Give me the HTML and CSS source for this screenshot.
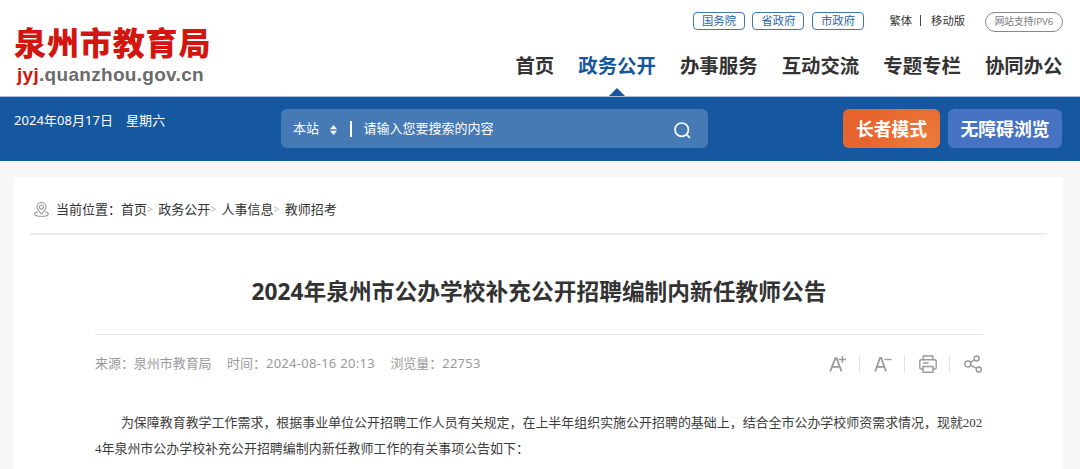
FILE: index.html
```
<!DOCTYPE html>
<html lang="zh-CN">
<head>
  <meta charset="UTF-8">
  <meta name="viewport" content="width=device-width, initial-scale=1.0">
  <title>2024年泉州市公办学校补充公开招聘编制内新任教师公告</title>
  <link rel="stylesheet" href="styles.css">
</head>
<body>
  <header class="header">
    <div class="logo">
      <div class="logo-name">泉州市教育局</div>
      <div class="logo-url"><span>jyj</span>.quanzhou.gov.cn</div>
    </div>
    <div class="header-right">
      <div class="top-links">
        <a class="gov-link">国务院</a>
        <a class="gov-link">省政府</a>
        <a class="gov-link">市政府</a>
        <a class="lang">繁体</a>
        <span class="split"></span>
        <a class="mobile">移动版</a>
        <span class="ipv6">网站支持IPV6</span>
      </div>
      <nav class="nav">
        <a>首页</a>
        <a class="active">政务公开</a>
        <a>办事服务</a>
        <a>互动交流</a>
        <a>专题专栏</a>
        <a>协同办公</a>
      </nav>
    </div>
  </header>

  <div class="bar">
    <div class="date"><span>2024年08月17日</span><span>星期六</span></div>
    <div class="search">
      <span class="search-scope">本站</span>
      <svg class="sort" width="7" height="10" viewBox="0 0 7 10"><path d="M3.5 0L7 4.2H0zM3.5 10L0 5.8h7z" fill="#fff"/></svg>
      <span class="search-split"></span>
      <span class="search-text">请输入您要搜索的内容</span>
      <svg class="search-icon" width="17" height="17" viewBox="0 0 17 17" fill="none" stroke="#fff" stroke-width="1.7"><circle cx="7.7" cy="7.7" r="6.7"/><path d="M12.2 12.2l3.8 3.8"/></svg>
    </div>
    <div class="modes">
      <a class="mode-btn elder">长者模式</a>
      <a class="mode-btn access">无障碍浏览</a>
    </div>
  </div>

  <main class="main">
    <div class="crumbs">
      <svg class="pin" width="15" height="15" viewBox="0 0 15 15" fill="none" stroke="#999" stroke-width="1.1"><path d="M7.5 12C5.2 9.4 3 7.5 3 5a4.500 4.500 0 0 1 9 0c0 2.500-2.200 4.400-4.500 7z"/><circle cx="7.500" cy="5" r="2"/><path d="M3.800 9.800C1.900 10.200.7 11 .7 12c0 1.300 2.800 2.300 6.800 2.300s6.800-1 6.800-2.300c0-1-1.200-1.800-3.100-2.200"/></svg>
      <span>当前位置：</span>
      <a>首页</a><i>&gt;</i>
      <a>政务公开</a><i>&gt;</i>
      <a>人事信息</a><i>&gt;</i>
      <a>教师招考</a>
    </div>

    <article class="article">
      <h1>2024年泉州市公办学校补充公开招聘编制内新任教师公告</h1>
      <div class="meta">
        <span>来源：泉州市教育局</span>
        <span>时间：<b>2024-08-16 20:13</b></span>
        <span>浏览量：<b>22753</b></span>
        <div class="tools">
          <a><svg width="18" height="18" viewBox="0 0 18 18" fill="none" stroke="#999" stroke-width="1.8"><path d="M1.200 16.500L6.300 3.200h1.200l5.100 13.300M3.200 11.900h7.400"/><path d="M9.800 4.500h7.200M13.400 1v7" stroke-width="1.400"/></svg></a>
          <a><svg width="18" height="18" viewBox="0 0 18 18" fill="none" stroke="#999" stroke-width="1.8"><path d="M1.200 16.500L6 2.800h1.200L12 16.500M3.100 11.800h7"/><path d="M10.500 4.500H17.500" stroke-width="1.400"/></svg></a>
          <a><svg width="18" height="18" viewBox="0 0 18 18" fill="none" stroke="#999" stroke-width="1.400"><path d="M4.200 4.800V1h9.600v3.800M4.200 14H2.300Q.8 14 .8 12.500V6.300Q.8 4.800 2.300 4.800h13.400q1.500 0 1.500 1.500v6.200q0 1.500-1.500 1.500h-1.900M4 11.500h10v5.700H4zM4 8h5.500"/></svg></a>
          <a><svg width="18" height="18" viewBox="0 0 18 18" fill="none" stroke="#999" stroke-width="1.400"><circle cx="3.800" cy="9" r="3"/><circle cx="12.600" cy="3.500" r="2.500"/><circle cx="14.800" cy="14.500" r="2.500"/><path d="M6.400 7.400l4.200-2.500M6.600 10.300l6 3"/></svg></a>
        </div>
      </div>
      <p class="content">为保障教育教学工作需求，根据事业单位公开招聘工作人员有关规定，在上半年组织实施公开招聘的基础上，结合全市公办学校师资需求情况，现就2024年泉州市公办学校补充公开招聘编制内新任教师工作的有关事项公告如下：</p>
    </article>
  </main>
</body>
</html>
```
FILE: styles.css
```
* {
  box-sizing: border-box;
}
body {
  margin: 0;
  background: #f7f7f7;
  color: #333;
  font-family: "Noto Sans", "Noto Sans CJK SC", sans-serif;
  font-size: 13px;
  height: 469px;
  overflow: hidden;
}
.header {
  display: flex;
  justify-content: space-between;
  height: 97px;
  padding: 0 17px 0 14px;
  background: #fff;
  border-bottom: 1px solid #a9bfd9;
}
.logo {
  padding-top: 23px;
}
.logo-name {
  height: 39px;
  line-height: 36px;
  font-family: "Noto Sans CJK SC", sans-serif;
  font-size: 32px;
  font-weight: 900;
  letter-spacing: 0.9px;
  color: #d3150f;
}
.logo-url {
  padding-left: 3px;
  line-height: 26px;
  font-family: "Liberation Sans", Arial, sans-serif;
  font-size: 19px;
  font-weight: bold;
  letter-spacing: 0.3px;
  color: #6b6b6b;
}
.logo-url span {
  color: #d3150f;
}
.header-right {
  display: flex;
  flex-direction: column;
  align-items: flex-end;
}
.top-links {
  display: flex;
  align-items: flex-start;
  height: 33px;
  padding-top: 12px;
  font-size: 11.3px;
  line-height: 18px;
}
.gov-link {
  width: 52px;
  height: 18px;
  margin-right: 7.5px;
  border: 1px solid #3f76b5;
  border-radius: 4px;
  color: #2c65a8;
  line-height: 16px;
  text-align: center;
}
.lang {
  margin-left: 18px;
}
.split {
  width: 1px;
  height: 11px;
  margin: 3px 10px 0 8px;
  background: #444;
}
.ipv6 {
  width: 78px;
  height: 20px;
  margin-left: 20px;
  border: 1px solid #888;
  border-radius: 10px;
  color: #777;
  font-family: "Open Sans", "Noto Sans CJK SC", sans-serif;
  font-size: 9.7px;
  line-height: 18px;
  text-align: center;
}
.nav {
  display: flex;
  gap: 24.1px;
  height: 64px;
  margin-right: 0.5px;
  font-size: 19.4px;
  font-weight: bold;
  line-height: 67px;
}
.nav a {
  position: relative;
}
.nav .active {
  color: #16589f;
}
.nav .active::after {
  content: "";
  position: absolute;
  left: 50%;
  bottom: 0;
  margin-left: -8px;
  border: 8px solid transparent;
  border-top: 0;
  border-bottom-color: #16589f;
}
.bar {
  display: flex;
  height: 64px;
  padding: 12px 18px 0 14px;
  background: #16589f;
  color: #fff;
}
.date {
  display: flex;
  gap: 13px;
  width: 267px;
  height: 24px;
  line-height: 23px;
  letter-spacing: 0.05px;
}
.search {
  display: flex;
  align-items: center;
  width: 427px;
  height: 39px;
  padding: 0 17px 0 12px;
  border-radius: 6px;
  background: #467ab4;
}
.search-scope,
.search-text {
  padding-bottom: 2px;
}
.sort {
  margin: 2px 13px 0 11px;
}
.search-split {
  width: 1.5px;
  height: 16px;
  margin-right: 12px;
  background: #fff;
}
.search-icon {
  margin: 4px 0 0 auto;
}
.modes {
  display: flex;
  gap: 8px;
  margin-left: auto;
}
.mode-btn {
  height: 39px;
  border-radius: 6px;
  font-size: 17.8px;
  font-weight: bold;
  line-height: 40px;
  text-align: center;
}
.elder {
  width: 97px;
  background: radial-gradient(circle at 85% 100%, #ec7e3b, #e8642f 65%);
}
.access {
  width: 114px;
  background: #4673c2;
}
.main {
  margin: 16px 17px 0 14px;
  padding: 0 16px;
  height: 300px;
  background: #fff;
}
.crumbs {
  display: flex;
  align-items: center;
  height: 58px;
  padding: 6px 0 0 4px;
  border-bottom: 2px solid #ededed;
}
.pin {
  margin: 2px 7px 0 0;
}
.crumbs i {
  width: 11.2px;
  color: #bbb;
  font-size: 11px;
  font-style: normal;
}
.article {
  margin: 0 64px 0 65px;
}
h1 {
  height: 100px;
  margin: 0;
  border-bottom: 1px solid #e6e6e6;
  font-size: 22.7px;
  letter-spacing: 0.05px;
  line-height: 113px;
  text-align: center;
  white-space: nowrap;
}
.meta {
  display: flex;
  align-items: center;
  gap: 15.5px;
  height: 57px;
  color: #999;
  line-height: 18px;
}
.meta span {
  padding-bottom: 2px;
  letter-spacing: -0.05px;
}
.meta b {
  font-weight: normal;
  letter-spacing: 0.28px;
}
.tools {
  display: flex;
  margin: 0 1.5px 0 auto;
}
.tools a {
  display: flex;
  height: 18px;
}
.tools a + a {
  margin-left: 12px;
  padding-left: 14px;
  border-left: 1px solid #e2e2e2;
}
.content {
  margin: 18px -1px 0 0;
  color: #3c3c3c;
  font-family: "Liberation Serif", "Noto Sans CJK SC", serif;
  font-size: 12.96px;
  line-height: 26px;
  text-indent: 2em;
  word-break: break-all;
}
```
